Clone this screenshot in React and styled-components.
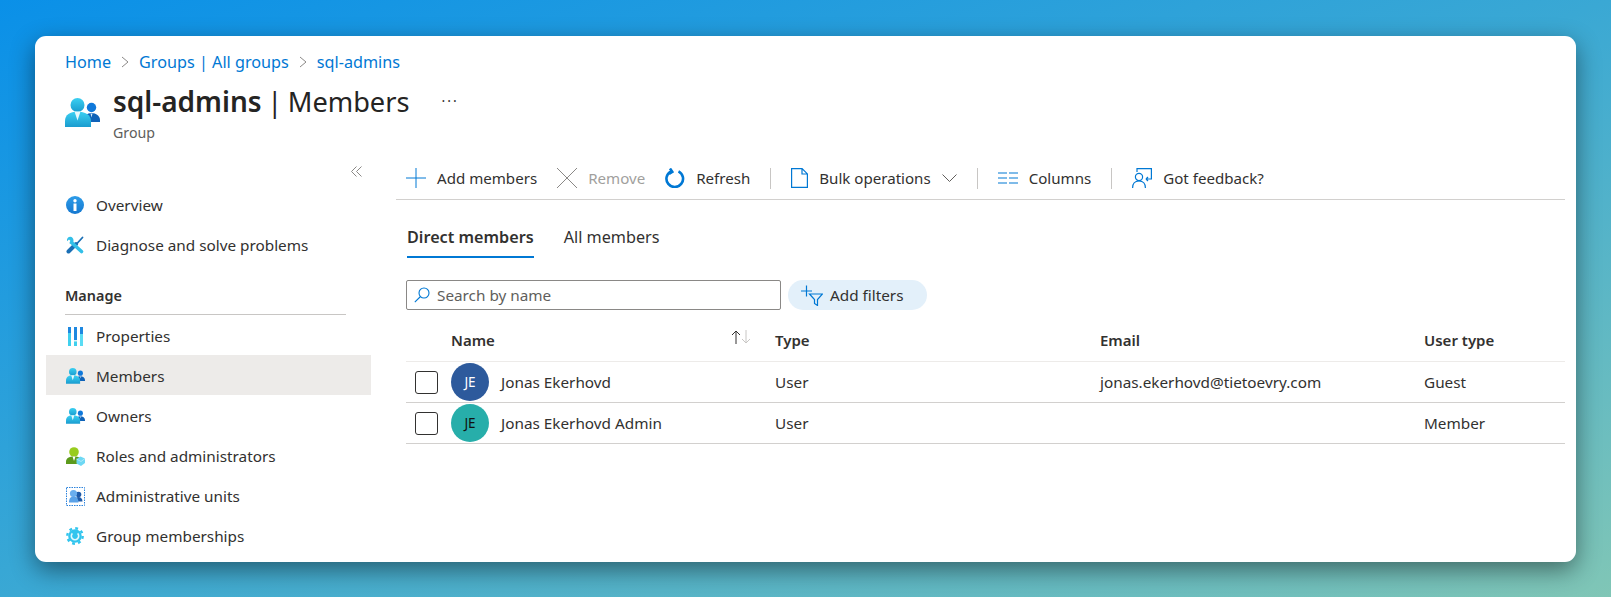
import styled, { createGlobalStyle } from "styled-components";

const GlobalStyle = createGlobalStyle`
  html, body {
    margin: 0;
    padding: 0;
  }
  body {
    font-family: "Noto Sans", "Open Sans", sans-serif;
    color: #323130;
    font-size: 15.3px;
  }
`;

const Page = styled.div`
  width: 1611px;
  height: 597px;
  box-sizing: border-box;
  padding: 36px 35px 35px;
  overflow: hidden;
  background: linear-gradient(to bottom right, #0a90e8, #3aa8d4 50%, #80c6b6);
`;

const Card = styled.div`
  height: 526px;
  background: #fff;
  border-radius: 11px;
  box-shadow: 0 8px 24px rgba(0, 0, 0, 0.45);
  overflow: hidden;
`;

const Header = styled.header`
  padding: 14px 30px 0;
  height: 100px;
`;

const Breadcrumb = styled.nav`
  display: flex;
  align-items: center;
  height: 24px;
  gap: 10px;
  font-size: 16.2px;
  color: #0078d4;
`;

const TitleRow = styled.div`
  display: flex;
  margin-top: 10px;
  gap: 13px;
`;

const HeaderIcon = styled.span`
  padding-top: 14px;
`;

const TitleBlock = styled.div`
  display: flex;
  flex-direction: column;
`;

const Title = styled.h1`
  margin: 0;
  font-size: 27.2px;
  line-height: 34px;
  font-weight: 400;
  word-spacing: -1.5px;
  color: #252423;

  & b {
    font-size: 28px;
    font-weight: 600;
  }
`;

const Subtitle = styled.div`
  margin-top: 4px;
  line-height: 20px;
  font-size: 14.2px;
  color: #605e5c;
`;

const Ellipsis = styled.span`
  margin: 2px 0 0 19px;
  line-height: 30px;
  letter-spacing: 2px;
  font-size: 14px;
`;

const Body = styled.div`
  display: grid;
  grid-template-columns: 336px 1fr;
`;

const Sidebar = styled.aside`
  padding-left: 11px;
`;

const CollapseRow = styled.div`
  display: flex;
  justify-content: flex-end;
  align-items: flex-end;
  height: 27px;
  padding-right: 9px;
  margin-bottom: 8px;
`;

const NavItem = styled.div`
  display: flex;
  align-items: center;
  height: 40px;
  box-sizing: border-box;
  padding-left: 19px;
  gap: 11px;
  background: ${(p) => (p.$active ? "#edebe9" : "transparent")};
`;

const ManageGroup = styled.div`
  ${NavItem} {
    padding-top: 2px;
  }
`;

const NavIcon = styled.span`
  display: flex;
  width: 20px;
  justify-content: center;
`;

const SectionTitle = styled.div`
  display: flex;
  align-items: flex-end;
  height: 50px;
  margin: 0 25px 0 19px;
  padding-bottom: 9px;
  box-sizing: border-box;
  border-bottom: 1px solid #c8c6c4;
  font-size: 14.4px;
  font-weight: 600;
`;

const Main = styled.main`
  padding: 5px 11px 0 25px;
`;

const Toolbar = styled.div`
  display: flex;
  align-items: center;
  height: 42px;
  padding: 2px 0 0 10px;
  gap: 20px;
  border-bottom: 1px solid #d2d0ce;
  font-size: 15.1px;
`;

const ToolItem = styled.div`
  display: flex;
  align-items: center;
  gap: 11px;
  color: ${(p) => (p.$disabled ? "#a19f9d" : "#323130")};
`;

const ToolDivider = styled.span`
  width: 1px;
  height: 21px;
  background: #c8c6c4;
`;

const Tabs = styled.div`
  display: flex;
  gap: 30px;
  margin: 22px 0 0 11px;
  font-size: 16.2px;
`;

const Tab = styled.div`
  height: 36px;
  line-height: 30px;
  box-sizing: border-box;
  font-weight: ${(p) => (p.$active ? 600 : 400)};
  border-bottom: 2px solid ${(p) => (p.$active ? "#0078d4" : "transparent")};
`;

const FilterRow = styled.div`
  display: flex;
  gap: 7px;
  margin: 22px 0 0 10px;
`;

const SearchBox = styled.div`
  display: flex;
  align-items: center;
  width: 375px;
  height: 30px;
  box-sizing: border-box;
  padding-left: 7px;
  gap: 7px;
  border: 1px solid #8a8886;
  border-radius: 2px;
  color: #605e5c;
`;

const FilterPill = styled.div`
  display: flex;
  align-items: center;
  width: 139px;
  height: 30px;
  box-sizing: border-box;
  padding-left: 13px;
  gap: 7px;
  border-radius: 15px;
  background: #e3f0fa;
`;

const Table = styled.div`
  margin: 16px 0 0 10px;
`;

const Row = styled.div`
  display: grid;
  grid-template-columns: 45px 324px 325px 324px 1fr;
  align-items: center;
  height: ${(p) => (p.$head ? "36px" : "41px")};
  box-sizing: border-box;
  padding-bottom: ${(p) => (p.$head ? "8px" : "0")};
  border-bottom: 1px solid ${(p) => (p.$head ? "#edebe9" : "#d2d0ce")};
  font-size: ${(p) => (p.$head ? "15px" : "inherit")};
  font-weight: ${(p) => (p.$head ? 600 : 400)};
`;

const NameHead = styled.div`
  display: flex;
  justify-content: space-between;
  padding-right: 23px;
`;

const NameCell = styled.div`
  display: flex;
  align-items: center;
  gap: 12px;
`;

const Checkbox = styled.span`
  display: block;
  width: 23px;
  height: 23px;
  box-sizing: border-box;
  margin-left: 9px;
  border: 1px solid #323130;
  border-radius: 3px;
`;

const Avatar = styled.span`
  display: flex;
  align-items: center;
  justify-content: center;
  width: 38px;
  height: 38px;
  border-radius: 50%;
  font-size: 13.5px;
  background: ${(p) => p.$bg};
  color: ${(p) => p.$fg};
`;

function PeopleIcon({ size = 19, id }) {
  return (
    <svg width={size} height={size * 0.83} viewBox="0 0 35 29">
      <defs>
        <linearGradient id={`${id}a`} x1="0" y1="0" x2="0" y2="1">
          <stop offset="0" stopColor="#3cd0f2" />
          <stop offset="1" stopColor="#1a9ccf" />
        </linearGradient>
      </defs>
      <circle cx="26.500" cy="9.500" r="4.700" fill="#0f78da" />
      <path d="M19 24v-2c0-4 3-7 7.500-7s8.500 3 8.500 7v2z" fill="#0f62b8" />
      <path d="M25.500 15.500l1 4 1-4z" fill="#d8ecfb" />
      <circle cx="12.500" cy="7" r="7" fill={`url(#${id}a)`} />
      <path d="M0 29v-6c0-6 5-9.500 12.500-9.500S26 17 26 23v6z" fill={`url(#${id}a)`} />
      <path d="M9.500 13.500l3 9 3-9z" fill="#e8f9fd" />
    </svg>
  );
}

function Chevron() {
  return (
    <svg width="8" height="12" viewBox="0 0 8 12" fill="none" stroke="#8a8886">
      <path d="M1 1l6 5-6 5" />
    </svg>
  );
}

export default function App() {
  return (
    <Page>
      <GlobalStyle />
      <Card>
        <Header>
          <Breadcrumb>
            <span>Home</span>
            <Chevron />
            <span>Groups | All groups</span>
            <Chevron />
            <span>sql-admins</span>
          </Breadcrumb>
          <TitleRow>
            <HeaderIcon>
              <PeopleIcon size={35} id="head" />
            </HeaderIcon>
            <TitleBlock>
              <Title>
                <b>sql-admins</b> | Members
              </Title>
              <Subtitle>Group</Subtitle>
            </TitleBlock>
            <Ellipsis>···</Ellipsis>
          </TitleRow>
        </Header>
        <Body>
          <Sidebar>
            <CollapseRow>
              <svg width="11" height="11" viewBox="0 0 11 11" fill="none" stroke="#8a8886">
                <path d="M5.500 0.500l-5 5 5 5M10.500 0.500l-5 5 5 5" />
              </svg>
            </CollapseRow>
            <NavItem>
              <NavIcon>
                <svg width="18" height="18" viewBox="0 0 18 18">
                  <defs>
                    <linearGradient id="info" x1="0" y1="0" x2="0" y2="1">
                      <stop offset="0" stopColor="#2d9ce8" />
                      <stop offset="1" stopColor="#1578d0" />
                    </linearGradient>
                  </defs>
                  <circle cx="9" cy="9" r="9" fill="url(#info)" />
                  <circle cx="9" cy="4.800" r="1.700" fill="#fff" />
                  <rect x="7.500" y="7.500" width="3" height="7.500" fill="#fff" />
                </svg>
              </NavIcon>
              Overview
            </NavItem>
            <NavItem>
              <NavIcon>
                <svg width="18" height="18" viewBox="0 0 18 18" fill="none" strokeLinecap="round">
                  <path d="M11 7.500L16.500 1.500" stroke="#1a6fb5" strokeWidth="1.800" />
                  <path d="M2.500 15.500L10 8" stroke="#1a6fb5" strokeWidth="4" />
                  <path d="M5.500 6.500L15.500 15.500" stroke="#32bfe8" strokeWidth="3.600" />
                  <path d="M4.500 0.800C2 0.800 0.600 2.800 1 5.200L3 3.500 5 5.500 3.500 7.500C6 8 7.800 6.500 7.500 4 7.300 2.300 6 1 4.500 0.800z" fill="#32bfe8" />
                </svg>
              </NavIcon>
              Diagnose and solve problems
            </NavItem>
            <SectionTitle>Manage</SectionTitle>
            <ManageGroup>
              <NavItem>
                <NavIcon>
                  <svg width="16" height="19" viewBox="0 0 16 19">
                    <rect x="1" width="3" height="19" fill="#3fd0ee" />
                    <rect x="1" width="3" height="6" fill="#1e88e0" />
                    <rect x="7" width="3" height="19" fill="#3fd0ee" />
                    <rect x="7" width="3" height="13" fill="#1e88e0" />
                    <rect x="7" y="13" width="3" height="1.500" fill="#d6f4fb" />
                    <rect x="13" width="3" height="19" fill="#5adcf4" />
                    <rect x="13" width="3" height="7" fill="#1e88e0" />
                  </svg>
                </NavIcon>
                Properties
              </NavItem>
              <NavItem $active>
                <NavIcon>
                  <PeopleIcon id="members" />
                </NavIcon>
                Members
              </NavItem>
              <NavItem>
                <NavIcon>
                  <PeopleIcon id="owners" />
                </NavIcon>
                Owners
              </NavItem>
              <NavItem>
                <NavIcon>
                  <svg width="19" height="19" viewBox="0 0 19 19">
                    <circle cx="8" cy="5" r="4.800" fill="#98cc1e" />
                    <path d="M0 17v-2c0-4 3-5.500 8-5.500s8 1.500 8 5.500v2z" fill="#5c9a1c" />
                    <path d="M6.500 9.500L8 14l1.500-4.500z" fill="#fff" />
                    <path d="M10.500 12l4-2.500 4.500 2v4.500l-4 3-4.500-2.500z" fill="#6ed8f4" />
                    <path d="M10.500 12l4.500 2.500 4-3" fill="none" stroke="#c8f1fb" strokeWidth=".7" />
                  </svg>
                </NavIcon>
                Roles and administrators
              </NavItem>
              <NavItem>
                <NavIcon>
                  <svg width="19" height="19" viewBox="0 0 19 19">
                    <rect x=".5" y=".5" width="18" height="18" fill="none" stroke="#2b82dc" strokeDasharray="1.500 1" />
                    <circle cx="12.500" cy="7.500" r="2.800" fill="#1f5aa8" />
                    <path d="M8.500 14.500c0-3 1.800-4.500 4-4.500s4 1.500 4 4.500z" fill="#1f5aa8" />
                    <circle cx="7.500" cy="6.500" r="3.600" fill="#6aaeee" />
                    <path d="M3 15.500c0-4.500 2-6 4.500-6s5 1.500 5 6z" fill="#5aa2e8" />
                  </svg>
                </NavIcon>
                Administrative units
              </NavItem>
              <NavItem>
                <NavIcon>
                  <svg width="18" height="18" viewBox="0 0 18 18">
                    <circle cx="9" cy="9" r="6.800" fill="#32c5ee" />
                    <circle cx="9" cy="9" r="7.700" fill="none" stroke="#32c5ee" strokeWidth="2.400" strokeDasharray="2.800 3.250" />
                    <path d="M11.600 6.400a3.700 3.700 0 1 1-5.200 0" fill="none" stroke="#e4f8fd" strokeWidth="1.600" />
                  </svg>
                </NavIcon>
                Group memberships
              </NavItem>
            </ManageGroup>
          </Sidebar>
          <Main>
            <Toolbar>
              <ToolItem>
                <svg width="20" height="20" viewBox="0 0 20 20" stroke="#0078d4">
                  <path d="M10 0v20M0 10h20" />
                </svg>
                Add members
              </ToolItem>
              <ToolItem $disabled>
                <svg width="20" height="20" viewBox="0 0 20 20" stroke="#8a8886">
                  <path d="M0 0l20 20M20 0L0 20" />
                </svg>
                Remove
              </ToolItem>
              <ToolItem>
                <svg width="20" height="20" viewBox="0 0 20 20" fill="none" stroke="#0078d4" strokeWidth="2.600">
                  <path d="M13.500 3.300a8.300 8.300 0 1 1-7.500 0" />
                  <path d="M5 0.500L7.300 3.800 4 6" />
                </svg>
                Refresh
              </ToolItem>
              <ToolDivider />
              <ToolItem>
                <svg width="17" height="20" viewBox="0 0 17 20" fill="none" stroke="#0078d4" strokeWidth="1.200">
                  <path d="M.6.600h10.500l5.300 5.300v13.500H.6zM11 .6v5.400h5.400" />
                </svg>
                Bulk operations
                <svg width="15" height="8" viewBox="0 0 15 8" fill="none" stroke="#605e5c">
                  <path d="M.5.500l7 7 7-7" />
                </svg>
              </ToolItem>
              <ToolDivider />
              <ToolItem>
                <svg width="20" height="12" viewBox="0 0 20 12" stroke="#0078d4" strokeWidth="1.200">
                  <path d="M0 1h9M0 6h9M0 11h9M11 1h9M11 6h9M11 11h9" />
                </svg>
                Columns
              </ToolItem>
              <ToolDivider />
              <ToolItem>
                <svg width="20" height="20" viewBox="0 0 20 20" fill="none" stroke="#0078d4" strokeWidth="1.200">
                  <path d="M5 4V.6h14.400v10.400H14M14 11l2-2M14 11l2 2" />
                  <circle cx="7" cy="9" r="3.600" />
                  <path d="M.6 20c0-4.500 2.500-7 6.400-7s6.400 2.500 6.400 7" />
                </svg>
                Got feedback?
              </ToolItem>
            </Toolbar>
            <Tabs>
              <Tab $active>Direct members</Tab>
              <Tab>All members</Tab>
            </Tabs>
            <FilterRow>
              <SearchBox>
                <svg width="16" height="16" viewBox="0 0 16 16" fill="none" stroke="#0078d4" strokeWidth="1.100">
                  <circle cx="10" cy="6" r="5" />
                  <path d="M6.500 9.500L.8 15.200" />
                </svg>
                Search by name
              </SearchBox>
              <FilterPill>
                <svg width="22" height="21" viewBox="0 0 22 21" fill="none" stroke="#0078d4" strokeWidth="1.200">
                  <path d="M0 6h11M5.500 .5v11" />
                  <path d="M8.500 9h13L16.500 14.500v6l-3-2v-4z" />
                </svg>
                Add filters
              </FilterPill>
            </FilterRow>
            <Table>
              <Row $head>
                <span />
                <NameHead>
                  Name
                  <svg width="22" height="14" viewBox="0 0 22 14" fill="none">
                    <path d="M6 14V1M2 5l4-4 4 4" stroke="#323130" />
                    <path d="M16 0v13M12 9l4 4 4-4" stroke="#c8c6c4" />
                  </svg>
                </NameHead>
                <span>Type</span>
                <span>Email</span>
                <span>User type</span>
              </Row>
              <Row>
                <Checkbox />
                <NameCell>
                  <Avatar $bg="#2d5a9c" $fg="#fff">JE</Avatar>
                  Jonas Ekerhovd
                </NameCell>
                <span>User</span>
                <span>jonas.ekerhovd@tietoevry.com</span>
                <span>Guest</span>
              </Row>
              <Row>
                <Checkbox />
                <NameCell>
                  <Avatar $bg="#27aeaa" $fg="#111">JE</Avatar>
                  Jonas Ekerhovd Admin
                </NameCell>
                <span>User</span>
                <span />
                <span>Member</span>
              </Row>
            </Table>
          </Main>
        </Body>
      </Card>
    </Page>
  );
}
